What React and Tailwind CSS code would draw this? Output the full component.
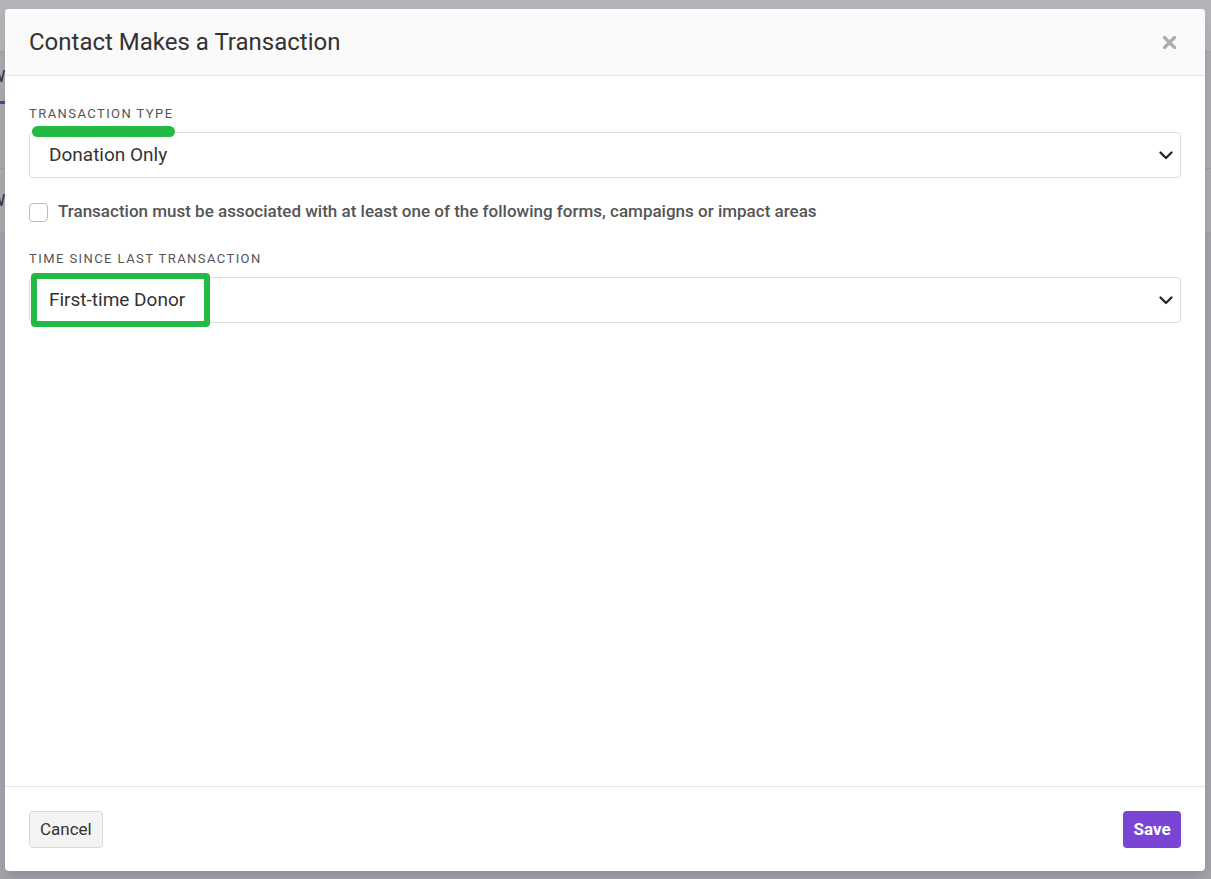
import React, { useState } from 'react';

const font = { fontFamily: 'Roboto, "Liberation Sans", sans-serif' };

// Faded page behind the overlay (only edges are visible)
const BackPage = () => (
  <div className="w-full h-full bg-[#a9aaaf] flex flex-col">
    <div className="h-[52px] bg-[#b4b4b8] border-b border-[#a3a3a8]" />
    <div className="h-[52px] flex items-center border-b-[3px] border-[#5b3aa0] w-[8px]">
      <span className="text-[#2b2b30] text-[16px] -ml-[9px]">W</span>
    </div>
    <div className="h-[65px] border-b border-[#9d9ea3]" />
    <div className="h-[64px] flex items-center border-b border-[#9d9ea3]">
      <span className="text-[#2b2b30] text-[16px] -ml-[9px]">W</span>
    </div>
    <div className="flex-1 bg-[#a2a3a9]" />
  </div>
);

const Chevron = () => (
  <svg width="14" height="9" viewBox="0 0 14 9" fill="none">
    <path d="M1.5 1.5 L7 7 L12.5 1.5" stroke="#222" strokeWidth="2.2" strokeLinecap="round" strokeLinejoin="round" />
  </svg>
);

const SelectField = ({ label, value, marker, boxed }) => (
  <div className="flex flex-col">
    <div className="text-[13px] leading-4 tracking-[0.11em] text-[#555] font-normal uppercase">{label}</div>
    <div className="relative mt-[10px]">
      {marker && (
        <div className="absolute left-[3px] -top-[6px] w-[143px] h-[11px] rounded-md bg-[#22b945]" />
      )}
      <div className="h-[46px] border border-[#dcdcdf] rounded-[4px] bg-white flex items-center justify-between pl-[19px] pr-[7px]">
        <span className="relative z-10 text-[19px] text-[#333]">{value}</span>
        <Chevron />
      </div>
      {boxed && (
        <div className="absolute left-[2px] -top-[4px] w-[179px] h-[54px] border-[6px] border-[#22b945] rounded-[4px]" />
      )}
    </div>
  </div>
);

export default function App() {
  const [checked, setChecked] = useState(false);

  return (
    <div className="relative w-[1211px] h-[879px] overflow-hidden" style={font}>
      <BackPage />

      {/* Modal */}
      <div className="absolute left-[5px] top-[9px] w-[1200px] h-[862px] bg-white rounded-[4px] shadow-lg flex flex-col">
        <div className="h-[67px] bg-[#fafafa] border-b border-[#e6e6e8] rounded-t-[4px] flex items-center justify-between pl-6 pr-[29px]">
          <h2 className="text-[24px] font-normal text-[#333]">Contact Makes a Transaction</h2>
          <button>
            <svg width="13" height="13" viewBox="0 0 13 13">
              <path d="M1.5 1.5 L11.5 11.5 M11.5 1.5 L1.5 11.5" stroke="#a9aeb5" strokeWidth="3.2" strokeLinecap="round" />
            </svg>
          </button>
        </div>

        <div className="flex-1 flex flex-col px-6 pt-[30px]">
          <SelectField label="Transaction Type" value="Donation Only" marker />

          <label className="mt-[22px] h-[24px] flex items-center gap-[10px] cursor-pointer">
            <input
              type="checkbox"
              checked={checked}
              onChange={() => setChecked(!checked)}
              className="appearance-none w-[19px] h-[19px] border border-[#b8bcc4] rounded-[4px] bg-white"
            />
            <span className="text-[17px] font-medium text-[#555]">
              Transaction must be associated with at least one of the following forms, campaigns or impact areas
            </span>
          </label>

          <div className="mt-[27px]">
            <SelectField label="Time Since Last Transaction" value="First-time Donor" boxed />
          </div>
        </div>

        <div className="h-[85px] border-t border-[#e6e6e8] flex items-start justify-between px-6 pt-[24px]">
          <button className="h-[37px] px-[10px] bg-[#f3f3f3] border border-[#d9d9d9] rounded-[4px] text-[17px] text-[#333]">
            Cancel
          </button>
          <button className="h-[37px] w-[58px] bg-[#7a45d5] rounded-[4px] text-[17px] font-bold text-white">
            Save
          </button>
        </div>
      </div>
    </div>
  );
}
